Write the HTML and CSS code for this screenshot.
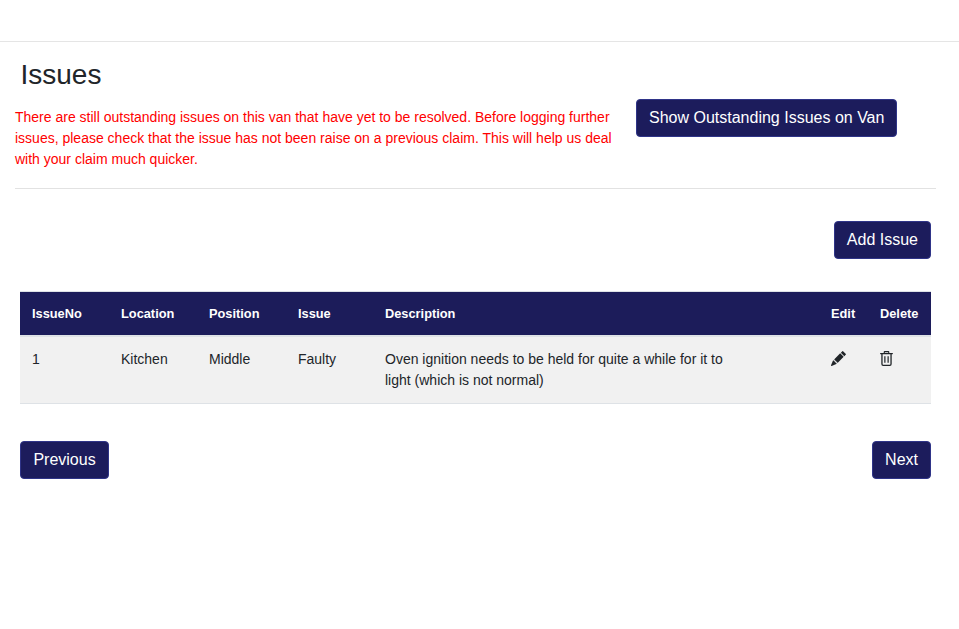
FILE: index.html
```html
<!DOCTYPE html>
<html lang="en">
<head>
<meta charset="utf-8">
<title>Issues</title>
<link rel="stylesheet" href="styles.css">
</head>
<body>
<header class="topbar"></header>
<main class="content">
  <h3 class="title">Issues</h3>
  <section class="notice">
    <p class="warning">There are still outstanding issues on this van that have yet to be resolved. Before logging further issues, please check that the issue has not been raise on a previous claim. This will help us deal with your claim much quicker.</p>
    <button class="btn" type="button">Show Outstanding Issues on Van</button>
  </section>
  <hr class="rule">
  <div class="inner">
    <div class="actions"><button class="btn" type="button">Add Issue</button></div>
    <table class="issues">
      <thead>
        <tr>
          <th class="c-no">IssueNo</th>
          <th class="c-loc">Location</th>
          <th class="c-pos">Position</th>
          <th class="c-iss">Issue</th>
          <th class="c-desc">Description</th>
          <th class="c-edit">Edit</th>
          <th class="c-del">Delete</th>
        </tr>
      </thead>
      <tbody>
        <tr>
          <td>1</td>
          <td>Kitchen</td>
          <td>Middle</td>
          <td>Faulty</td>
          <td><div class="desc">Oven ignition needs to be held for quite a while for it to light (which is not normal)</div></td>
          <td>
            <svg class="icon" viewBox="0 0 16 16" aria-hidden="true"><path d="M12.854.146a.5.5 0 0 0-.707 0L10.5 1.793 14.207 5.5l1.647-1.646a.5.5 0 0 0 0-.708l-3-3zm.646 6.061L9.793 2.5 3.293 9H3.5a.5.5 0 0 1 .5.5v.5h.5a.5.5 0 0 1 .5.5v.5h.5a.5.5 0 0 1 .5.5v.5h.5a.5.5 0 0 1 .5.5v.207l6.5-6.5zm-7.468 7.468A.5.5 0 0 1 6 13.5V13h-.5a.5.5 0 0 1-.5-.5V12h-.5a.5.5 0 0 1-.5-.5V11h-.5a.5.5 0 0 1-.5-.5V10h-.5a.499.499 0 0 1-.175-.032l-.179.178a.5.5 0 0 0-.11.168l-2 5a.5.5 0 0 0 .65.65l5-2a.5.5 0 0 0 .168-.11l.178-.178z"/></svg>
          </td>
          <td>
            <svg class="icon icon-trash" viewBox="0 0 14 16" aria-hidden="true"><path fill-rule="evenodd" d="M5 0h4a1 1 0 0 1 1 1v1h3.300a.7.7 0 0 1 0 1.400H12.600V14a2 2 0 0 1-2 2H3.400a2 2 0 0 1-2-2V3.400H.7a.7.7 0 0 1 0-1.400H4V1a1 1 0 0 1 1-1zm.2 1.200V2h3.600v-.8H5.200zM2.800 3.400V14a.6.6 0 0 0 .6.6h7.200a.6.6 0 0 0 .6-.6V3.400H2.800z"/><path d="M4.600 5.500h1.300v7.200H4.600zM8.100 5.500h1.300v7.200H8.100z"/></svg>
          </td>
        </tr>
      </tbody>
    </table>
    <nav class="pager">
      <button class="btn btn-prev" type="button">Previous</button>
      <button class="btn" type="button">Next</button>
    </nav>
  </div>
</main>
</body>
</html>
```
FILE: styles.css
```css
* { box-sizing: border-box; }
html, body { margin: 0; padding: 0; }
body {
  background: #fff;
  color: #212529;
  font-family: "Liberation Sans", Arial, sans-serif;
  font-size: 14px;
  line-height: 21px;
}
.topbar { height: 42px; border-bottom: 1px solid #e5e5e5; }
.content { width: 951px; padding: 0 15px; }
.title {
  margin: 0;
  padding: 16px 0 0 5.500px;
  font-size: 28px;
  font-weight: 400;
  line-height: 34px;
}
.notice { display: flex; align-items: flex-start; padding-top: 7px; }
.warning { width: 621px; margin: 0; padding-top: 8px; color: #f00; }
.rule { margin: 18px 0 0; border: 0; border-top: 1px solid #e2e2e2; }
.inner { padding: 0 5px; }
.actions { display: flex; justify-content: flex-end; padding-top: 32px; }
.btn {
  height: 38px;
  padding: 0 12px;
  background: #1c1c5c;
  border: 1px solid #2f3488;
  border-radius: 4px;
  color: #fff;
  font: 16px/24px "Liberation Sans", Arial, sans-serif;
}
.btn-prev { width: 89px; padding: 0; }
.issues {
  width: 911px;
  margin-top: 32px;
  border-collapse: collapse;
  table-layout: fixed;
  border-top: 1px solid #dee2e6;
}
.issues th {
  height: 44px;
  padding: 0 0 0 12px;
  background: #1c1c5a;
  border-bottom: 2px solid #dee2e6;
  color: #fff;
  font-size: 12.8px;
  font-weight: 700;
  text-align: left;
}
.issues td {
  height: 67px;
  padding: 12px 0 12px 12px;
  background: #f1f1f1;
  border-bottom: 1px solid #dee2e6;
  vertical-align: top;
}
.c-no { width: 89px; }
.c-loc { width: 88px; }
.c-pos { width: 89px; }
.c-iss { width: 87px; }
.c-desc { width: 446px; }
.c-edit { width: 49px; }
.desc { width: 345px; }
.icon { display: block; width: 15px; height: 15px; margin-top: 2px; fill: #212529; }
.icon-trash { width: 13px; }
.pager { display: flex; justify-content: space-between; padding-top: 37px; }
```
